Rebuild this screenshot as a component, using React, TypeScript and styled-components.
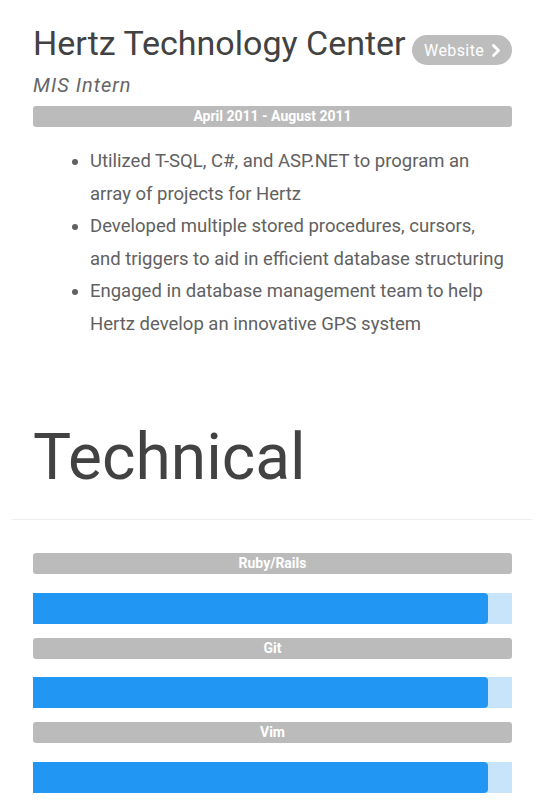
import React from "react";
import styled, { createGlobalStyle } from "styled-components";

const Global = createGlobalStyle`
  html, body { margin: 0; padding: 0; background: #fff; }
  body { font-family: Roboto, "Noto Sans", Arial, sans-serif; }
  * { box-sizing: border-box; }
`;

const Page = styled.div`
  width: 544px;
  padding: 0 12px;
`;

const Section = styled.section`
  padding: 24px 20px 0 21px;
`;

const TitleRow = styled.div`
  display: flex;
  align-items: flex-start;
  gap: 6px;
`;

const Title = styled.h2`
  margin: 0;
  font-size: 34px;
  line-height: 38px;
  font-weight: 400;
  white-space: nowrap;
  color: #424242;
`;

const WebsiteButton = styled.a`
  display: inline-flex;
  align-items: center;
  justify-content: center;
  gap: 7px;
  margin-top: 11px;
  width: 100px;
  height: 30px;
  flex-shrink: 0;
  border-radius: 15px;
  background: #bdbdbd;
  color: #fff;
  font-size: 16px;
  letter-spacing: 0.4px;
  text-decoration: none;
  padding-left: 2px;
`;

const Role = styled.h3`
  margin: 8px 0 0;
  font-size: 20px;
  line-height: 24px;
  font-style: italic;
  font-weight: 400;
  letter-spacing: 1px;
  color: #666;
`;

const LabelBar = styled.div`
  height: 21px;
  border-radius: 3px;
  background: #bbbbbb;
  color: #fff;
  font-size: 14px;
  font-weight: 700;
  line-height: 20px;
  text-align: center;
`;

const DateBar = styled(LabelBar)`
  margin-top: 9px;
`;

const List = styled.ul`
  margin: 18px -6px 0 0;
  padding-left: 57px;
  color: #616161;
  font-size: 18.5px;
  line-height: 32.5px;
`;

const Item = styled.li``;

const Heading = styled.h1`
  margin: 80px 0 0;
  padding-left: 21px;
  font-size: 64px;
  line-height: 75px;
  font-weight: 400;
  color: #424242;
`;

const Divider = styled.hr`
  margin: 24px 0 0;
  border: 0;
  border-top: 1px solid #eeeeee;
`;

const Skills = styled.div`
  padding: 33px 20px 0 21px;
  display: flex;
  flex-direction: column;
`;

const Skill = styled.div`
  display: flex;
  flex-direction: column;
  gap: 18.5px;
  margin-bottom: 14px;
`;

const Track = styled.div`
  height: 31px;
  background: #c8e4fb;
`;

const Fill = styled.div`
  height: 100%;
  background: #2196f3;
  border-radius: 0 4px 4px 0;
`;

const Chevron = () => (
  <svg width="10" height="13" viewBox="0 0 10 13">
    <path d="M2.5 1.5 L7.5 6.5 L2.5 11.5" fill="none" stroke="#fff" strokeWidth="2.8" strokeLinecap="round" strokeLinejoin="round" />
  </svg>
);

const NB = "\u00a0";

const skills = [
  { name: "Ruby/Rails", level: 95 },
  { name: "Git", level: 95 },
  { name: "Vim", level: 95 },
];

export default function App() {
  return (
    <Page>
      <Global />
      <Section>
        <TitleRow>
          <Title>Hertz Technology Center</Title>
          <WebsiteButton href="#">
            Website <Chevron />
          </WebsiteButton>
        </TitleRow>
        <Role>MIS Intern</Role>
        <DateBar>April 2011 - August 2011</DateBar>
        <List>
          <Item>{`Utilized T-SQL, C#, and ASP.NET to program an array${NB}of projects for Hertz`}</Item>
          <Item>{`Developed multiple stored procedures, cursors, and${NB}triggers to aid in efficient database structuring`}</Item>
          <Item>Engaged in database management team to help Hertz develop an innovative GPS system</Item>
        </List>
      </Section>
      <Heading>Technical</Heading>
      <Divider />
      <Skills>
        {skills.map((s) => (
          <Skill key={s.name}>
            <LabelBar>{s.name}</LabelBar>
            <Track>
              <Fill style={{ width: `${s.level}%` }} />
            </Track>
          </Skill>
        ))}
      </Skills>
    </Page>
  );
}
